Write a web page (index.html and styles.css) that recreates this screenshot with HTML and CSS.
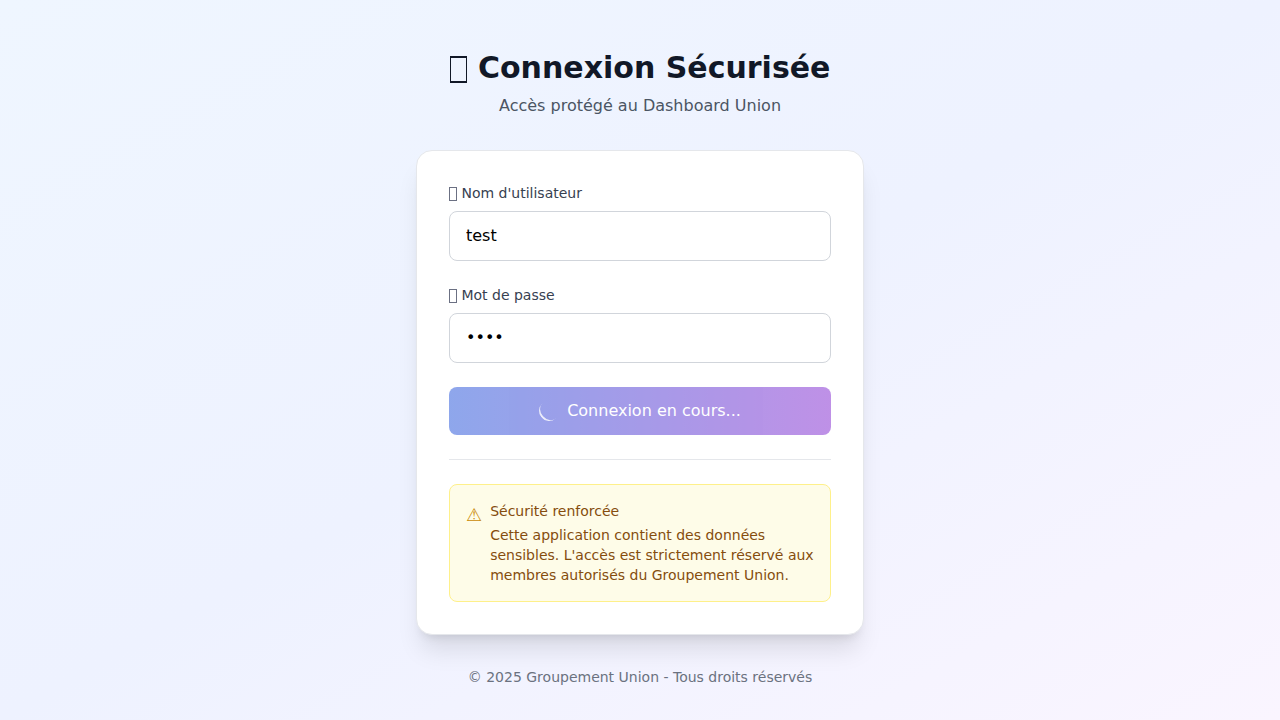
FILE: index.html
```html
<!DOCTYPE html>
<html lang="fr">
<head>
<meta charset="UTF-8">
<meta name="viewport" content="width=device-width, initial-scale=1">
<title>Connexion Sécurisée</title>
<link rel="stylesheet" href="styles.css">
</head>
<body>
<main class="login">
  <header class="login-header">
    <h1 class="title"><span class="glyph glyph-large"></span> Connexion Sécurisée</h1>
    <p class="subtitle">Accès protégé au Dashboard Union</p>
  </header>
  <section class="card">
    <form class="form">
      <div class="field">
        <label class="label" for="username"><span class="glyph"></span> Nom d'utilisateur</label>
        <input class="input" id="username" type="text" value="test">
      </div>
      <div class="field">
        <label class="label" for="password"><span class="glyph"></span> Mot de passe</label>
        <input class="input" id="password" type="password" value="test">
      </div>
      <button class="submit" type="submit" disabled>
        <span class="spinner"></span>
        <span>Connexion en cours...</span>
      </button>
    </form>
    <div class="notice-area">
      <div class="notice">
        <span class="notice-icon">⚠&#xFE0E;</span>
        <div class="notice-body">
          <p class="notice-title">Sécurité renforcée</p>
          <p>Cette application contient des données sensibles. L'accès est strictement réservé aux membres autorisés du Groupement Union.</p>
        </div>
      </div>
    </div>
  </section>
  <footer class="footer">© 2025 Groupement Union - Tous droits réservés</footer>
</main>
</body>
</html>
```
FILE: styles.css
```css
*, *::before, *::after { box-sizing: border-box; }
body {
  margin: 0;
  min-height: 100vh;
  display: flex;
  align-items: center;
  justify-content: center;
  padding: 32px 16px 16px;
  font-family: "DejaVu Sans", sans-serif;
  font-size: 16px;
  line-height: 24px;
  background: linear-gradient(to bottom right, #eff6ff, #eef2ff, #faf5ff);
}
h1, p { margin: 0; }
.login { width: 100%; max-width: 448px; }
.login-header { text-align: center; margin-bottom: 32px; }
.title { font-size: 30px; line-height: 36px; font-weight: 700; color: #111827; margin-bottom: 8px; }
.glyph {
  display: inline-block;
  width: 8px;
  height: 14px;
  border: 1px solid #6b7083;
  vertical-align: -3px;
}
.glyph-large {
  width: 17px;
  height: 27px;
  margin-right: 1px;
  border-color: #111827;
  border-width: 2px 1px;
  vertical-align: -5px;
}
.subtitle { color: #4b5563; }
.card {
  padding: 32px;
  background: #fff;
  border: 1px solid #e5e7eb;
  border-radius: 16px;
  box-shadow: 0 20px 25px -5px rgba(0,0,0,.1), 0 8px 10px -6px rgba(0,0,0,.1);
}
.form { display: flex; flex-direction: column; gap: 24px; }
.label { display: block; margin-bottom: 8px; font-size: 14px; line-height: 20px; font-weight: 500; color: #374151; }
.input {
  display: block;
  width: 100%;
  padding: 12px 16px;
  font: inherit;
  color: #000;
  background: #fff;
  border: 1px solid #d1d5db;
  border-radius: 8px;
}
.submit {
  display: flex;
  align-items: center;
  justify-content: center;
  width: 100%;
  padding: 12px 16px;
  font: inherit;
  font-weight: 500;
  color: #fff;
  background: linear-gradient(to right, #1d4ed8, #7e22ce);
  border: 0;
  border-radius: 8px;
  opacity: .5;
}
.spinner {
  width: 20px;
  height: 20px;
  margin-right: 8px;
  border-radius: 50%;
  border-bottom: 2px solid rgba(255,255,255,.8);
  transform: rotate(48deg);
}
.notice-area { margin-top: 24px; padding-top: 24px; border-top: 1px solid #e5e7eb; }
.notice {
  display: flex;
  align-items: flex-start;
  gap: 8px;
  padding: 16px;
  background: #fefce8;
  border: 1px solid #fef08a;
  border-radius: 8px;
  font-size: 14px;
  line-height: 20px;
  color: #854d0e;
}
.notice-icon { font-size: 18px; line-height: 28px; color: #ca8a04; }
.notice-title { font-weight: 500; margin-bottom: 4px; }
.footer { margin-top: 32px; text-align: center; font-size: 14px; line-height: 20px; color: #6b7280; }
```
